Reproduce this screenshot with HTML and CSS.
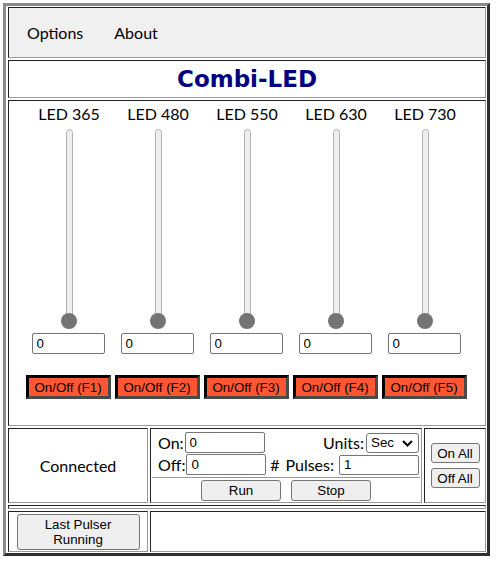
FILE: index.html
```html
<!DOCTYPE html>
<html>
<head>
<meta charset="utf-8">
<title>Combi-LED</title>
<link rel="stylesheet" href="styles.css">
</head>
<body>
<div class="frame">
  <div class="cell menu">
    <span class="menu-item">Options</span>
    <span class="menu-item">About</span>
  </div>
  <div class="cell title-cell">
    <h1 class="title">Combi-LED</h1>
  </div>
  <div class="cell leds">
    <div class="led">
      <div class="led-label">LED 365</div>
      <div class="slider"><div class="track"></div><div class="thumb"></div></div>
      <input class="field led-field" type="text" value="0">
      <button class="toggle">On/Off (F1)</button>
    </div>
    <div class="led">
      <div class="led-label">LED 480</div>
      <div class="slider"><div class="track"></div><div class="thumb"></div></div>
      <input class="field led-field" type="text" value="0">
      <button class="toggle">On/Off (F2)</button>
    </div>
    <div class="led">
      <div class="led-label">LED 550</div>
      <div class="slider"><div class="track"></div><div class="thumb"></div></div>
      <input class="field led-field" type="text" value="0">
      <button class="toggle">On/Off (F3)</button>
    </div>
    <div class="led">
      <div class="led-label">LED 630</div>
      <div class="slider"><div class="track"></div><div class="thumb"></div></div>
      <input class="field led-field" type="text" value="0">
      <button class="toggle">On/Off (F4)</button>
    </div>
    <div class="led">
      <div class="led-label">LED 730</div>
      <div class="slider"><div class="track"></div><div class="thumb"></div></div>
      <input class="field led-field" type="text" value="0">
      <button class="toggle">On/Off (F5)</button>
    </div>
  </div>
  <div class="cell status">Connected</div>
  <div class="cell pulser">
    <div class="prow">
      <span class="pgroup"><span class="plabel">On:</span><input class="field pfield" type="text" value="0"></span>
      <span class="pgroup"><span class="plabel">Units:</span><span class="select-wrap"><select class="select"><option>Sec</option></select><svg class="chev" width="11" height="7" viewBox="0 0 11 7"><polyline points="1,1 5.5,5.5 10,1" fill="none" stroke="#000" stroke-width="2"/></svg></span></span>
    </div>
    <div class="prow">
      <span class="pgroup"><span class="plabel">Off:</span><input class="field pfield off" type="text" value="0"></span>
      <span class="pgroup"><span class="plabel hash">#</span><span class="plabel">Pulses:</span><input class="field pfield pulses" type="text" value="1"></span>
    </div>
    <div class="divider"></div>
    <div class="prow-buttons">
      <button class="btn wide">Run</button>
      <button class="btn wide">Stop</button>
    </div>
  </div>
  <div class="cell allbtns">
    <button class="btn all">On All</button>
    <button class="btn all">Off All</button>
  </div>
  <div class="cell spacer"></div>
  <div class="cell lastcell">
    <button class="btn last">Last Pulser<br>Running</button>
  </div>
  <div class="cell emptycell"></div>
</div>
</body>
</html>
```
FILE: styles.css
```css
body {
  margin: 3px;
  background: #fff;
  font-family: Lato, "Noto Sans", sans-serif;
  font-size: 16px;
  color: #000;
}

.frame {
  width: 487px;
  box-sizing: border-box;
  border: 3px solid;
  border-color: #8a8a8a #2e2e2e #2e2e2e #8a8a8a;
  padding: 1px 1px 1px 2px;
  display: grid;
  grid-template-columns: 140px 272px 62px;
  grid-template-rows: 51px 38px 326px 75px 4px 41px;
  gap: 2px;
}

.cell {
  box-sizing: border-box;
  border: 1px solid;
  border-color: #222 #999 #999 #222;
}

.menu {
  grid-column: 1 / -1;
  background: #f0f0f0;
  display: flex;
  align-items: center;
  padding-left: 18px;
  gap: 31px;
}

.title-cell {
  grid-column: 1 / -1;
  display: flex;
  align-items: center;
  justify-content: center;
}

.title {
  margin: 0;
  font-family: "DejaVu Sans", Verdana, sans-serif;
  font-weight: bold;
  font-size: 23px;
  color: #000080;
  line-height: 1;
}

.leds {
  grid-column: 1 / -1;
  display: flex;
  justify-content: center;
  padding-top: 3px;
}

.led {
  width: 89px;
  display: flex;
  flex-direction: column;
  align-items: center;
}

.led-label {
  line-height: 19px;
  white-space: nowrap;
}

.slider {
  margin-top: 6px;
  display: flex;
  flex-direction: column;
  align-items: center;
}

.track {
  width: 7px;
  height: 192px;
  box-sizing: border-box;
  background: #efefef;
  border: 1px solid #b2b2b2;
  border-radius: 4px;
}

.thumb {
  width: 16px;
  height: 16px;
  margin-top: -8px;
  border-radius: 50%;
  background: #747474;
}

.field {
  box-sizing: border-box;
  border: 1px solid #767676;
  border-radius: 2px;
  padding: 1px 4px;
  font-family: "Liberation Sans", Arial, sans-serif;
  font-size: 13.33px;
  color: #000;
  background: #fff;
  outline: none;
}

.led-field {
  width: 73px;
  height: 21px;
  margin-top: 4px;
  margin-left: -2px;
}

.toggle {
  width: 85px;
  height: 24px;
  margin-top: 21px;
  margin-left: -2px;
  box-sizing: border-box;
  padding: 0;
  border: 3px solid;
  border-color: #000 #4a4a4a #4a4a4a #000;
  background: #ff5733;
  font-family: "Liberation Sans", Arial, sans-serif;
  font-size: 13.33px;
  color: #000;
}

.status {
  display: flex;
  align-items: center;
  justify-content: center;
}

.pulser {
  padding: 3px 1px 0 1px;
  display: flex;
  flex-direction: column;
}

.prow {
  height: 21px;
  margin-bottom: 1px;
  padding: 0 1px 0 6px;
  display: flex;
  align-items: center;
  justify-content: space-between;
}

.pgroup {
  display: flex;
  align-items: center;
}

.plabel {
  line-height: 19px;
}

.hash {
  margin-right: 6px;
}

.pfield {
  width: 80px;
  height: 21px;
  margin-left: 1px;
}

.pfield.off {
  margin-left: 1px;
}

.pfield.pulses {
  height: 20px;
  margin-left: 5px;
}

.select-wrap {
  position: relative;
  margin-left: 2px;
  display: flex;
}

.select {
  appearance: none;
  -webkit-appearance: none;
  width: 53px;
  height: 20px;
  box-sizing: border-box;
  border: 1px solid #767676;
  border-radius: 3px;
  padding: 0 0 0 4px;
  background: #fff;
  font-family: "Liberation Sans", Arial, sans-serif;
  font-size: 13.33px;
  color: #000;
}

.chev {
  position: absolute;
  right: 6px;
  top: 7px;
}

.divider {
  height: 1px;
  background: #999;
  margin-top: 1px;
}

.prow-buttons {
  margin-top: 2px;
  display: flex;
  justify-content: center;
  gap: 10px;
}

.btn {
  box-sizing: border-box;
  background: #efefef;
  border: 1px solid #767676;
  border-radius: 3px;
  padding: 1px 6px;
  font-family: "Liberation Sans", Arial, sans-serif;
  font-size: 13.33px;
  color: #000;
}

.btn.wide {
  width: 80px;
  height: 21px;
}

.allbtns {
  display: flex;
  flex-direction: column;
  align-items: center;
  justify-content: center;
  gap: 5px;
}

.btn.all {
  width: 49px;
  height: 20px;
  padding: 0;
}

.spacer {
  grid-column: 1 / -1;
}

.lastcell {
  display: flex;
  align-items: center;
  justify-content: center;
}

.btn.last {
  width: 123px;
  height: 36px;
  line-height: 15px;
}

.emptycell {
  grid-column: 2 / -1;
}
```
